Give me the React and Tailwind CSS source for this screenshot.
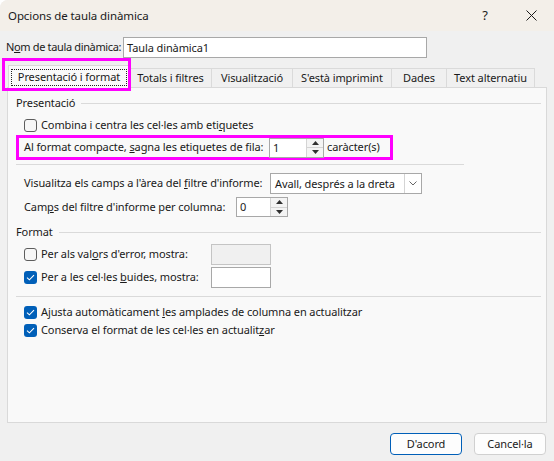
import React from "react";

function Check({ checked }) {
    if (checked) {
        return (
            <span className="w-[13px] h-[13px] rounded-[3px] bg-[#005fb8] flex items-center justify-center shrink-0">
                <svg width="9" height="7" viewBox="0 0 9 7" fill="none">
                    <path d="M1 3.6 L3.4 5.8 L8 1.2" stroke="#fff" strokeWidth="1.1" />
                </svg>
            </span>
        );
    }
    return <span className="w-[13px] h-[13px] rounded-[3px] border border-[#5d5d5d] bg-[#f7f7f7] shrink-0"></span>;
}

function Spin({ value, width }) {
    return (
        <div className={`flex h-[20px] border border-[#a8a8a8] bg-white shrink-0 ${width}`}>
            <div className="flex-1 pl-[3px] leading-[18px]">{value}</div>
            <div className="w-[17px] flex flex-col border-l border-[#d4d4d4]">
                <div className="flex-1 flex items-center justify-center border-b border-[#d4d4d4] bg-[#f4f4f4]">
                    <svg width="7" height="4" viewBox="0 0 7 4"><path d="M0 4 L3.5 0 L7 4 Z" fill="#303030" /></svg>
                </div>
                <div className="flex-1 flex items-center justify-center bg-[#f4f4f4]">
                    <svg width="7" height="4" viewBox="0 0 7 4"><path d="M0 0 L3.5 4 L7 0 Z" fill="#303030" /></svg>
                </div>
            </div>
        </div>
    );
}

function CheckRow({ checked, children, className = "" }) {
    return (
        <div className={`flex items-center gap-[4px] pl-[8px] h-[18px] ${className}`}>
            <Check checked={checked} />
            <span className="whitespace-nowrap">{children}</span>
        </div>
    );
}

function GroupTitle({ children, className = "" }) {
    return (
        <div className={`flex items-center h-[16px] ${className}`}>
            <span className="whitespace-nowrap">{children}</span>
            <div className="flex-1 h-px bg-[#dadada] ml-[6px] mr-[5px]"></div>
        </div>
    );
}

const tabs = [
    ["Totals i filtres", "w-[82px]"],
    ["Visualització", "w-[81px]"],
    ["S'està imprimint", "w-[99px]"],
    ["Dades", "w-[55px]"],
    ["Text alternatiu", "w-[88px]"],
];

export default function App() {
    return (
        <div className="w-[554px] h-[461px] bg-[#f0f0f0] text-[11px] tracking-[-0.1px] text-[#1a1a1a] font-['Segoe_UI','Noto_Sans',sans-serif] flex flex-col overflow-hidden rounded-tl-[8px]">
            {/* barra de títol */}
            <div className="h-[31px] bg-[#f3efe9] flex items-center pl-[8px] shrink-0 text-[11.5px]">
                <span className="flex-1">Opcions de taula dinàmica</span>
                <div className="w-[46px] h-full flex items-center justify-center text-[13px]">?</div>
                <div className="w-[46px] h-full flex items-center justify-center">
                    <svg width="11" height="11" viewBox="0 0 11 11">
                        <path d="M0.5 0.5 L10.5 10.5 M10.5 0.5 L0.5 10.5" stroke="#1a1a1a" strokeWidth="1" />
                    </svg>
                </div>
            </div>

            {/* nom */}
            <div className="flex items-center mt-[6px] pl-[6px] h-[21px]">
                <span className="w-[117px] whitespace-nowrap tracking-[-0.35px]">N<u>o</u>m de taula dinàmica:</span>
                <div className="w-[304px] h-[21px] border border-[#a8a8a8] bg-white pl-[3px] leading-[19px]">Taula dinàmica1</div>
            </div>

            {/* pestanyes */}
            <div className="flex items-end mt-[7px] pl-[8px] h-[22px] relative z-10">
                <div className="relative w-[122px] h-[23px] -mb-px bg-[#f9f9f9] border border-b-0 border-[#d9d9d9] flex pt-[3px] px-[2px] pb-[2px]">
                    <div className="flex-1 border border-dotted border-[#222] flex items-center justify-center whitespace-nowrap">Presentació i format</div>
                    <div className="absolute -left-[7px] -top-[8px] w-[129px] h-[33px] border-[3px] border-[#ff00ff]"></div>
                </div>
                {tabs.map(([label, w]) => (
                    <div key={label} className={`${w} h-[19px] border border-l-0 border-b-0 border-[#dadada] bg-[#f0f0f0] flex items-center justify-center whitespace-nowrap`}>
                        {label}
                    </div>
                ))}
            </div>

            {/* contingut */}
            <div className="mx-[7px] w-[540px] h-[336px] border border-[#d9d9d9] bg-[#f9f9f9] pl-[8px] pt-[7px] flex flex-col">
                <GroupTitle>Presentació</GroupTitle>
                <CheckRow className="mt-[5px]">Combina i centra les cel·les amb eti<u>q</u>uetes</CheckRow>

                <div className="mt-[1px] w-[377px] h-[25px] border-[3px] border-[#ff00ff] flex items-center pl-[5px]">
                    <span className="w-[245px] whitespace-nowrap">Al format compacte, <u>s</u>agna les etiquetes de fila:</span>
                    <Spin value="1" width="w-[55px]" />
                    <span className="ml-[3px] whitespace-nowrap">caràcter(s)</span>
                </div>

                <div className="mt-[4px] w-[448px] h-px bg-[#dadada]"></div>

                <div className="flex items-center mt-[8px] pl-[8px] h-[21px]">
                    <span className="w-[246px] whitespace-nowrap">Visualitza els camps a l'àrea del <u>f</u>iltre d'informe:</span>
                    <div className="w-[152px] h-[21px] border border-[#a8a8a8] bg-white flex">
                        <span className="flex-1 pl-[4px] leading-[19px] whitespace-nowrap">Avall, després a la dreta</span>
                        <div className="w-[17px] border-l border-[#d4d4d4] flex items-center justify-center">
                            <svg width="8" height="5" viewBox="0 0 8 5" fill="none"><path d="M0.5 0.5 L4 4 L7.5 0.5" stroke="#555" strokeWidth="0.9" /></svg>
                        </div>
                    </div>
                </div>

                <div className="flex items-center mt-[3px] pl-[8px] h-[20px]">
                    <span className="w-[212px] whitespace-nowrap">Cam<u>p</u>s del filtre d'informe per columna:</span>
                    <Spin value="0" width="w-[52px]" />
                </div>

                <GroupTitle className="mt-[7px]">Format</GroupTitle>

                <div className="flex items-center mt-[4px] h-[21px]">
                    <CheckRow><span className="inline-block w-[170px]">Per als val<u>o</u>rs d'error, mostra:</span></CheckRow>
                    <div className="w-[60px] h-[21px] border border-[#c4c4c4] bg-[#f0f0f0]"></div>
                </div>
                <div className="flex items-center mt-[2px] h-[21px]">
                    <CheckRow checked><span className="inline-block w-[170px]">Per a les cel·les <u>b</u>uides, mostra:</span></CheckRow>
                    <div className="w-[60px] h-[21px] border border-[#a8a8a8] bg-white"></div>
                </div>

                <div className="mt-[8px] mr-[5px] h-px bg-[#dadada]"></div>

                <CheckRow checked className="mt-[6px]">Ajusta automàticament <u>l</u>es amplades de columna en actualitzar</CheckRow>
                <CheckRow checked>Conserva el format de les cel·les en actualit<u>z</u>ar</CheckRow>
            </div>

            {/* botons */}
            <div className="flex justify-end gap-[12px] mt-[10px] pr-[8px]">
                <button className="w-[72px] h-[22px] rounded-[4px] border border-[#005fb8] bg-[#fdfdfd] leading-[20px]">D'acord</button>
                <button className="w-[72px] h-[22px] rounded-[4px] border border-[#d0d0d0] bg-[#fdfdfd] leading-[20px]">Cancel·la</button>
            </div>
        </div>
    );
}
